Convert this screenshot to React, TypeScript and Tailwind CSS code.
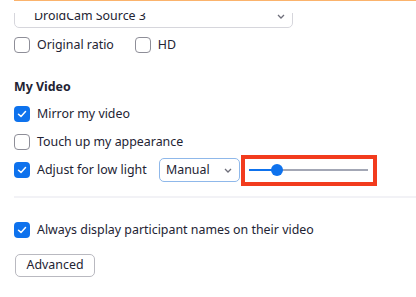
import React from "react";

const Chevron = ({ className = "" }: { className?: string }) => (
  <svg width="8" height="5" viewBox="0 0 8 5" className={className}>
    <path d="M1 1 L4 4 L7 1" fill="none" stroke="#6e6e7a" strokeWidth="1.3" />
  </svg>
);

const Box = ({ checked }: { checked?: boolean }) =>
  checked ? (
    <div className="w-4 h-4 rounded-[4px] bg-[#0e72ed] flex items-center justify-center shrink-0">
      <svg width="10" height="8" viewBox="0 0 10 8">
        <path d="M1.5 4.2 L4 6.4 L8.5 1.6" fill="none" stroke="white" strokeWidth="1.5" strokeLinecap="round" strokeLinejoin="round" />
      </svg>
    </div>
  ) : (
    <div className="w-4 h-4 rounded-[4px] border-[1.5px] border-[#8e8e98] bg-white shrink-0" />
  );

const Row = ({ checked, label, className = "" }: { checked?: boolean; label: string; className?: string }) => (
  <div className={"flex items-center h-4 " + className}>
    <Box checked={checked} />
    <span className="ml-[7px] text-[12.4px] leading-4 text-[#232333]">{label}</span>
  </div>
);

export default function App() {
  return (
    <div
      className="w-[416px] h-[297px] bg-white overflow-hidden flex flex-col"
      style={{ fontFamily: '"Segoe UI", "Noto Sans", "Open Sans", sans-serif' }}
    >
      <div className="ml-[14px] h-px bg-[#fbb36c]" />
      <div className="mt-[12px] h-[15px] overflow-hidden ml-[14px] w-[279px]">
        <div className="-mt-[9px] h-[24px] w-[279px] border border-[#d6d6dc] rounded-[5px] flex items-center pl-[19px] pr-[7px]">
          <span className="text-[12.4px] text-[#232333] flex-1">DroidCam Source 3</span>
          <Chevron />
        </div>
      </div>
      <div className="mt-[9px] ml-[14px] flex items-center">
        <Row label="Original ratio" />
        <Row label="HD" className="ml-[21px]" />
      </div>
      <div className="mt-[25px] ml-[14px] text-[12.4px] leading-[18px] font-bold text-[#232333]">My Video</div>
      <Row checked label="Mirror my video" className="mt-[10px] ml-[14px]" />
      <Row label="Touch up my appearance" className="mt-[12px] ml-[14px]" />
      <div className="mt-[4px] ml-[14px] flex items-center h-[32px]">
        <Box checked />
        <span className="ml-[7px] text-[12.4px] leading-4 text-[#232333]">Adjust for low light</span>
      </div>
      <div className="-mt-[32px] ml-[159px] flex items-center h-[32px]">
        <div className="w-[81px] h-[24px] border border-[#8fb8ea] rounded-[5px] flex items-center pl-[6px] pr-[7px]">
          <span className="text-[12.4px] text-[#232333] flex-1">Manual</span>
          <Chevron />
        </div>
        <div className="ml-px w-[136px] h-[31px] border-4 border-[#f23b1d] flex items-center pl-[4px] pr-[5px]">
          <div className="relative flex-1 h-[2px] bg-[#a3a7b5]">
            <div className="absolute left-0 top-0 h-[2px] w-[28px] bg-[#0e72ed]" />
            <div className="absolute left-[22px] -top-[5px] w-3 h-3 rounded-full bg-[#0e72ed]" />
          </div>
        </div>
      </div>
      <div className="mt-[10px] ml-[14px] h-[2px] bg-[#f2f2f6]" />
      <Row checked label="Always display participant names on their video" className="mt-[24px] ml-[14px]" />
      <button className="mt-[16px] ml-[15px] w-[80px] h-[23px] border border-[#b9b9c0] rounded-[5px] text-[12.4px] text-[#232333] flex items-center justify-center">
        Advanced
      </button>
    </div>
  );
}
